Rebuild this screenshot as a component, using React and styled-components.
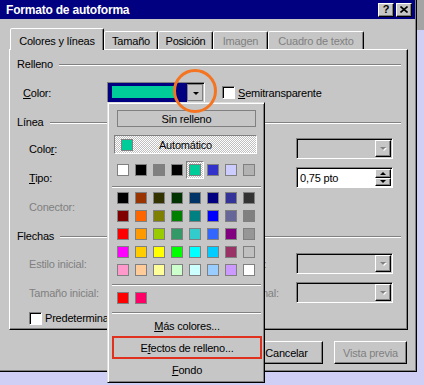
import React from "react";
import styled, { createGlobalStyle, css } from "styled-components";

const GREY = "#c6c6c6";

const GlobalStyle = createGlobalStyle`
  html, body {
    margin: 0;
    padding: 0;
  }
  body {
    width: 424px;
    height: 385px;
    overflow: hidden;
    background: #cfcff6;
    font-family: "Liberation Sans", Arial, sans-serif;
    font-size: 11px;
    letter-spacing: -0.2px;
    color: #000;
  }
`;

const raised = css`
  border: 1px solid;
  border-color: #fff #000 #000 #fff;
  box-shadow: inset -1px -1px #808080;
`;

const sunken = css`
  border: 1px solid;
  border-color: #808080 #fff #fff #808080;
  box-shadow: inset 1px 1px #000;
`;

const dither = css`
  background: repeating-conic-gradient(#fff 0 25%, #c0c0c0 0 50%) 0 0 / 2px 2px;
`;

const scheme = ["#ffffff", "#000000", "#808080", "#000000", "#00cc99", "#3333cc", "#ccccff", "#b2b2b2"];

const palette = [
  ["#000000", "#993300", "#333300", "#003300", "#003366", "#000080", "#333399", "#333333"],
  ["#800000", "#ff6600", "#808000", "#008000", "#008080", "#0000ff", "#666699", "#808080"],
  ["#ff0000", "#ff9900", "#99cc00", "#339966", "#33cccc", "#3366ff", "#800080", "#969696"],
  ["#ff00ff", "#ffcc00", "#ffff00", "#00ff00", "#00ffff", "#00ccff", "#993366", "#c0c0c0"],
  ["#ff99cc", "#ffcc99", "#ffff99", "#ccffcc", "#ccffff", "#99ccff", "#cc99ff", "#ffffff"],
];

const recent = ["#ff0000", "#ff0066"];

const tabs = [
  { label: "Colores y líneas", w: 94, active: true },
  { label: "Tamaño", w: 54 },
  { label: "Posición", w: 55 },
  { label: "Imagen", w: 55, disabled: true },
  { label: "Cuadro de texto", w: 96, disabled: true },
];

const Desktop = styled.div`
  display: flex;
  align-items: flex-start;
  height: 385px;
`;

const SideStrip = styled.div`
  flex: 1;
  height: 30px;
  background: #a4a4a4;
`;

const Window = styled.div`
  position: relative;
  width: 417px;
  height: 372px;
  box-sizing: border-box;
  background: ${GREY};
  border-right: 1px solid #000;
  border-bottom: 1px solid #000;
  box-shadow: inset -1px -1px #808080;
  display: flex;
  flex-direction: column;
`;

const TitleBar = styled.div`
  height: 19px;
  margin-right: 1px;
  background: #000080;
  display: flex;
  align-items: center;
  padding: 0 3px 0 6px;
  color: #fff;
  font-weight: bold;
  font-size: 12px;
`;

const Title = styled.span`
  flex: 1;
`;

const TitleButtons = styled.div`
  display: flex;
  gap: 2px;
`;

const TitleButton = styled.div`
  width: 16px;
  height: 14px;
  box-sizing: border-box;
  ${raised};
  background: ${GREY};
  color: #000;
  display: flex;
  align-items: center;
  justify-content: center;
  font-size: 11px;
  line-height: 1;
`;

const TabStrip = styled.div`
  display: flex;
  align-items: flex-end;
  height: 21px;
  margin-top: 9px;
  padding-left: 10px;
  position: relative;
  z-index: 2;
`;

const Tab = styled.div`
  box-sizing: border-box;
  width: ${(p) => p.$w}px;
  height: ${(p) => (p.$active ? 22 : 18)}px;
  margin-bottom: ${(p) => (p.$active ? -1 : 0)}px;
  padding-top: ${(p) => (p.$active ? 2 : 0)}px;
  display: flex;
  align-items: center;
  justify-content: center;
  background: ${GREY};
  border: 1px solid;
  border-bottom: none;
  border-color: #fff #000 transparent #fff;
  border-radius: 2px 2px 0 0;
  box-shadow: inset -1px 0 #808080;
  color: ${(p) => (p.$disabled ? "#808080" : "#000")};
  white-space: nowrap;
`;

const Panel = styled.div`
  height: 281px;
  margin: 0 8px 0 9px;
  box-sizing: border-box;
  ${raised};
  padding: 0 6px 0 7px;
  display: flex;
  flex-direction: column;
`;

const Heading = styled.div`
  display: flex;
  align-items: center;
  gap: 6px;
  height: 14px;
  margin-top: ${(p) => p.$top}px;
  &::after {
    content: "";
    flex: 1;
    margin-top: 2px;
    border-top: 1px solid #808080;
    border-bottom: 1px solid #fff;
  }
`;

const FillRow = styled.div`
  display: flex;
  align-items: center;
  height: 21px;
  margin-top: ${(p) => p.$top}px;
  padding-left: 6px;
`;

const FieldRow = styled.div`
  display: grid;
  grid-template-columns: 78px 97px 12px 80px 97px;
  align-items: center;
  height: 21px;
  margin-top: ${(p) => p.$top}px;
  padding-left: 12px;
`;

const Label = styled.span`
  color: ${(p) => (p.$disabled ? "#808080" : "#000")};
  white-space: nowrap;
  width: ${(p) => (p.$w ? `${p.$w}px` : "auto")};
  grid-column: ${(p) => p.$col || "auto"};
  overflow: hidden;
`;

const Combo = styled.div`
  box-sizing: border-box;
  width: ${(p) => p.$w || 97}px;
  height: 21px;
  ${sunken};
  padding: 1px;
  display: flex;
  background: ${(p) => (p.$white ? "#fff" : GREY)};
  grid-column: ${(p) => p.$col || "auto"};
`;

const ComboText = styled.div`
  flex: 1;
  display: flex;
  align-items: center;
  padding-left: 2px;
`;

const ColorField = styled.div`
  flex: 1;
  margin: -1px 0 -1px -1px;
  background: #000080;
  padding: 3px 13px 4px 4px;
  display: flex;
`;

const ColorFill = styled.div`
  flex: 1;
  background: #00cc99;
`;

const ArrowButton = styled.div`
  width: 16px;
  box-sizing: border-box;
  background: ${GREY};
  display: flex;
  align-items: center;
  justify-content: center;
  ${(p) =>
    p.$pressed
      ? css`
          border: 1px solid #808080;
          padding: 1px 0 0 1px;
        `
      : raised};
`;

const Arrow = styled.span`
  width: 0;
  height: 0;
  border-left: 3px solid transparent;
  border-right: 3px solid transparent;
  ${(p) => (p.$up ? "border-bottom" : "border-top")}: 3px solid ${(p) => (p.$disabled ? "#808080" : "#000")};
  ${(p) => p.$disabled && "filter: drop-shadow(1px 1px 0 #fff);"}
`;

const SpinColumn = styled.div`
  width: 16px;
  display: flex;
  flex-direction: column;
`;

const SpinButton = styled.div`
  flex: 1;
  box-sizing: border-box;
  ${raised};
  background: ${GREY};
  display: flex;
  align-items: center;
  justify-content: center;
`;

const CheckBox = styled.span`
  width: 13px;
  height: 13px;
  box-sizing: border-box;
  ${sunken};
  background: #fff;
  margin: ${(p) => p.$margin || "0"};
  flex-shrink: 0;
`;

const CheckRow = styled.div`
  display: flex;
  align-items: center;
  gap: 3px;
  height: 18px;
  margin-top: ${(p) => p.$top}px;
  padding-left: 12px;
  white-space: nowrap;
`;

const ButtonRow = styled.div`
  display: flex;
  justify-content: flex-end;
  gap: 11px;
  margin-top: 11px;
  padding-right: 9px;
`;

const Button = styled.button`
  width: 73px;
  height: 23px;
  box-sizing: border-box;
  padding: 0;
  font: inherit;
  letter-spacing: inherit;
  background: ${GREY};
  ${raised};
  color: ${(p) => (p.disabled ? "#808080" : "#000")};
`;

const Popup = styled.div`
  position: absolute;
  left: 107px;
  top: 102px;
  width: 158px;
  height: 281px;
  box-sizing: border-box;
  background: ${GREY};
  border: 1px solid;
  border-color: #dfdfdf #000 #000 #dfdfdf;
  box-shadow: inset 1px 1px #fff, inset -1px -1px #808080;
  display: flex;
  flex-direction: column;
  z-index: 5;
`;

const NoFillButton = styled.div`
  width: 139px;
  height: 17px;
  box-sizing: border-box;
  margin: 7px 0 0 9px;
  border: 1px solid #808080;
  display: flex;
  align-items: center;
  justify-content: center;
`;

const AutoButton = styled.div`
  width: 143px;
  height: 19px;
  box-sizing: border-box;
  margin: 8px 0 0 6px;
  border: 1px solid;
  border-color: #808080 #fff #fff #808080;
  ${dither};
  display: grid;
  grid-template-columns: 12px 1fr 12px;
  align-items: center;
  padding: 0 6px;
`;

const AutoLabel = styled.span`
  text-align: center;
`;

const SwatchGrid = styled.div`
  display: grid;
  grid-template-columns: repeat(8, 18px);
  grid-auto-rows: 18px;
  margin-top: ${(p) => p.$top}px;
  padding-left: 6px;
`;

const Cell = styled.div`
  box-sizing: border-box;
  display: flex;
  align-items: center;
  justify-content: center;
  ${(p) =>
    p.$selected &&
    css`
      border: 1px solid;
      border-color: #808080 #fff #fff #808080;
      ${dither};
    `}
`;

const Swatch = styled.span`
  width: 12px;
  height: 12px;
  box-sizing: border-box;
  border: 1px solid #808080;
  background: ${(p) => p.$c};
`;

const Separator = styled.div`
  margin: ${(p) => p.$top}px 3px 0 4px;
  border-top: 1px solid #808080;
  border-bottom: 1px solid #fff;
`;

const MenuItem = styled.div`
  box-sizing: border-box;
  height: ${(p) => p.$h}px;
  margin: ${(p) => p.$top || 0}px 2px 0 4px;
  display: flex;
  align-items: center;
  justify-content: center;
  ${(p) => p.$marked && "border: 2px solid #e0301e;"}
`;

const Highlight = styled.div`
  position: absolute;
  left: 173px;
  top: 69px;
  width: 44px;
  height: 44px;
  box-sizing: border-box;
  border: 3px solid #f47421;
  border-radius: 50%;
  z-index: 10;
`;

const CloseIcon = () => (
  <svg width="8" height="7" viewBox="0 0 8 7">
    <path d="M0.5 0.5 L7.5 6.5 M7.5 0.5 L0.5 6.5" stroke="#000" strokeWidth="1.6" />
  </svg>
);

const DropCombo = ({ col }) => (
  <Combo $col={col}>
    <ComboText />
    <ArrowButton>
      <Arrow $disabled />
    </ArrowButton>
  </Combo>
);

export default function App() {
  return (
    <>
      <GlobalStyle />
      <Desktop>
        <Window>
          <TitleBar>
            <Title>Formato de autoforma</Title>
            <TitleButtons>
              <TitleButton>?</TitleButton>
              <TitleButton>
                <CloseIcon />
              </TitleButton>
            </TitleButtons>
          </TitleBar>

          <TabStrip>
            {tabs.map((t) => (
              <Tab key={t.label} $w={t.w} $active={t.active} $disabled={t.disabled}>
                {t.label}
              </Tab>
            ))}
          </TabStrip>

          <Panel>
            <Heading $top={7}>Relleno</Heading>
            <FillRow $top={11}>
              <Label $w={84}>
                <u>C</u>olor:
              </Label>
              <Combo $w={98}>
                <ColorField>
                  <ColorFill />
                </ColorField>
                <ArrowButton $pressed>
                  <Arrow />
                </ArrowButton>
              </Combo>
              <CheckBox $margin="0 3px 0 17px" />
              <Label>
                <u>S</u>emitransparente
              </Label>
            </FillRow>

            <Heading $top={12}>Línea</Heading>
            <FieldRow $top={9}>
              <Label>
                Colo<u>r</u>:
              </Label>
              <DropCombo />
              <DropCombo col={5} />
            </FieldRow>
            <FieldRow $top={8}>
              <Label>
                <u>T</u>ipo:
              </Label>
              <DropCombo />
              <Combo $col={5} $white>
                <ComboText>0,75 pto</ComboText>
                <SpinColumn>
                  <SpinButton>
                    <Arrow $up />
                  </SpinButton>
                  <SpinButton>
                    <Arrow />
                  </SpinButton>
                </SpinColumn>
              </Combo>
            </FieldRow>
            <FieldRow $top={8}>
              <Label $disabled>Conector:</Label>
              <DropCombo />
            </FieldRow>

            <Heading $top={12}>Flechas</Heading>
            <FieldRow $top={10}>
              <Label $disabled>Estilo inicial:</Label>
              <DropCombo />
              <Label $col={4} $disabled>
                Estilo final:
              </Label>
              <DropCombo col={5} />
            </FieldRow>
            <FieldRow $top={8}>
              <Label $disabled>Tamaño inicial:</Label>
              <DropCombo />
              <Label $col={4} $disabled>
                Tamaño final:
              </Label>
              <DropCombo col={5} />
            </FieldRow>
            <CheckRow $top={6}>
              <CheckBox />
              <Label $w={62}>Predeterminado</Label>
            </CheckRow>
          </Panel>

          <ButtonRow>
            <Button>Cancelar</Button>
            <Button disabled>Vista previa</Button>
          </ButtonRow>

          <Popup>
            <NoFillButton>Sin relleno</NoFillButton>
            <AutoButton>
              <Swatch $c="#00cc99" />
              <AutoLabel>Automático</AutoLabel>
            </AutoButton>
            <SwatchGrid $top={7}>
              {scheme.map((c, i) => (
                <Cell key={i} $selected={i === 4}>
                  <Swatch $c={c} />
                </Cell>
              ))}
            </SwatchGrid>
            <Separator $top={7} />
            <SwatchGrid $top={1}>
              {palette.flat().map((c, i) => (
                <Cell key={i}>
                  <Swatch $c={c} />
                </Cell>
              ))}
            </SwatchGrid>
            <Separator $top={5} />
            <SwatchGrid $top={3}>
              {recent.map((c) => (
                <Cell key={c}>
                  <Swatch $c={c} />
                </Cell>
              ))}
            </SwatchGrid>
            <Separator $top={5} />
            <MenuItem $h={21} $top={1}>
              <span>
                <u>M</u>ás colores...
              </span>
            </MenuItem>
            <MenuItem $h={23} $marked>
              <span>
                E<u>f</u>ectos de relleno...
              </span>
            </MenuItem>
            <MenuItem $h={22}>
              <span>
                <u>F</u>ondo
              </span>
            </MenuItem>
          </Popup>

          <Highlight />
        </Window>
        <SideStrip />
      </Desktop>
    </>
  );
}
